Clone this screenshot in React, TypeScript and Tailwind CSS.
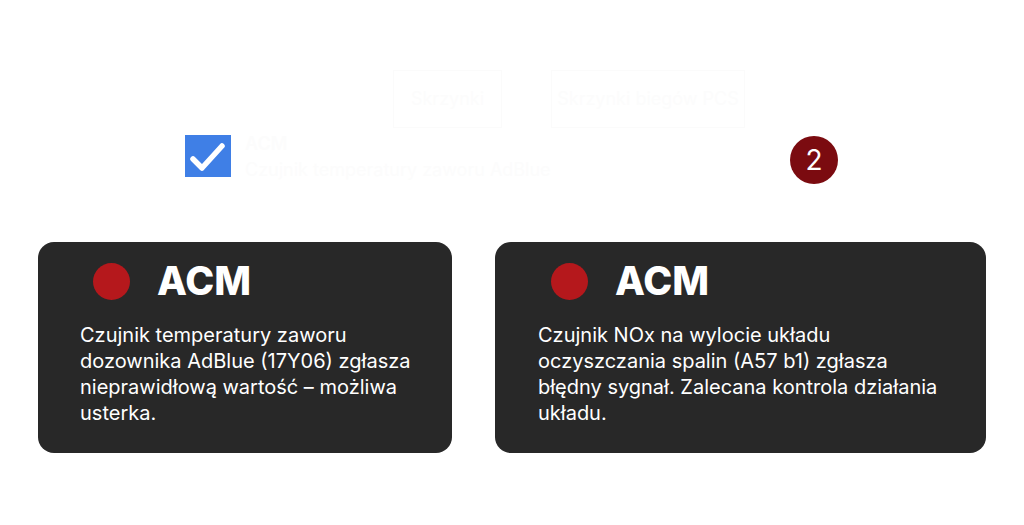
import React from 'react';

const cards = [
  {
    title: 'ACM',
    lines: ['Czujnik temperatury zaworu', 'dozownika AdBlue (17Y06) zgłasza', 'nieprawidłową wartość – możliwa', 'usterka.'],
    width: 'w-[414px]',
    pad: 'pl-[42px] pr-[20px]',
  },
  {
    title: 'ACM',
    lines: ['Czujnik NOx na wylocie układu', 'oczyszczania spalin (A57 b1) zgłasza', 'błędny sygnał. Zalecana kontrola działania', 'układu.'],
    width: 'w-[491px]',
    pad: 'pl-[43px] pr-[16px]',
  },
];

function CheckIcon() {
  return (
    <svg width="46" height="42" viewBox="0 0 46 42">
      <rect x="0" y="0" width="46" height="42" fill="#3f7fe6" />
      <path
        d="M8 24 L17 33 L37 11"
        fill="none"
        stroke="#fff"
        strokeWidth="5.5"
        strokeLinecap="round"
        strokeLinejoin="round"
      />
    </svg>
  );
}

export default function App() {
  return (
    <div
      className="w-[1024px] h-[525px] bg-white overflow-hidden"
      style={{ fontFamily: 'Inter, "Noto Sans", sans-serif' }}
    >
      {/* faint tabs */}
      <div className="flex pt-[70px] pl-[393px] gap-[49px]">
        <div className="w-[109px] h-[58px] border border-[#fbfbfb] flex items-center justify-center text-[#fcfcfc] text-lg">
          Skrzynki
        </div>
        <div className="w-[194px] h-[58px] border border-[#fbfbfb] flex items-center justify-center text-[#fcfcfc] text-lg">
          Skrzynki biegów PCS
        </div>
      </div>

      {/* checkbox row */}
      <div className="flex items-start mt-[7px] pl-[185px]">
        <CheckIcon />
        <div className="ml-[14px] -mt-[4px] text-[#fcfcfc] leading-[26px] text-[18px]">
          <div className="font-semibold">ACM</div>
          <div>Czujnik temperatury zaworu AdBlue</div>
        </div>
        <div className="ml-auto mr-[186px] mt-[1px] w-[48px] h-[48px] rounded-full bg-[#7b0b10] text-white text-[28px] flex items-center justify-center">
          2
        </div>
      </div>

      {/* cards */}
      <div className="flex gap-[43px] pl-[38px] mt-[58px]">
        {cards.map((c, i) => (
          <div
            key={i}
            className={`${c.width} h-[211px] rounded-[16px] bg-[#282828] ${c.pad} pt-[19px]`}
          >
            <div className="flex items-center">
              <div className="ml-[13px] w-[37px] h-[37px] rounded-full bg-[#b5181c]" />
              <div className="ml-[27px] text-white font-extrabold text-[39px] leading-[40px]">
                {c.title}
              </div>
            </div>
            <p className="mt-[21px] text-white text-[20px] leading-[26px]">
              {c.lines.map((l, j) => (
                <span key={j} className="block whitespace-nowrap">
                  {l}
                </span>
              ))}
            </p>
          </div>
        ))}
      </div>
    </div>
  );
}
